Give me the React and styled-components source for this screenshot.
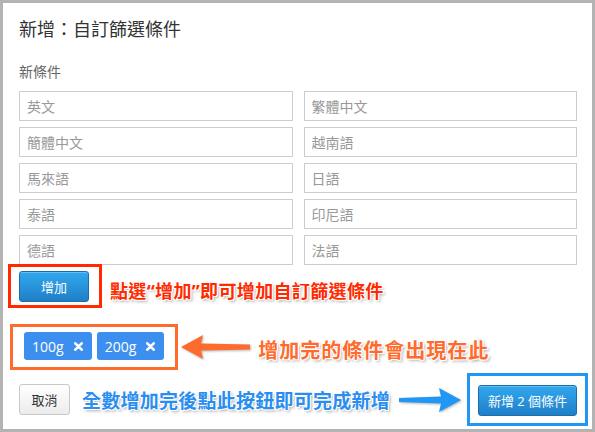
import styled, { createGlobalStyle } from "styled-components";

const GlobalStyle = createGlobalStyle`
  body {
    margin: 0;
    background: #b3b3b3;
    font-family: "Open Sans", "Noto Sans CJK TC", sans-serif;
  }
`

const Panel = styled.div`
  box-sizing: border-box;
  margin: 3px;
  width: 589px;
  height: 426px;
  background: #fff;
  padding: 14px 15px 0 16px;
  display: flex;
  flex-direction: column;
`
const Title = styled.h2`
  margin: 0;
  font-size: 18px;
  line-height: 24px;
  font-weight: 400;
  color: #333;
`
const Label = styled.div`
  margin-top: 22px;
  font-size: 14px;
  line-height: 18px;
  color: #666;
`
const Fields = styled.div`
  margin-top: 10px;
  display: grid;
  grid-template-columns: 1fr 1fr;
  column-gap: 11px;
  row-gap: 6px;
`
const Field = styled.input`
  box-sizing: border-box;
  height: 30px;
  margin: 0;
  border: 1px solid #ccc;
  border-radius: 0;
  padding: 0 7px;
  font-family: inherit;
  font-size: 14px;
  color: #333;
  outline: none;
  &::placeholder {
    color: #999;
  }
`
const Row = styled.div`
  display: flex;
  align-items: center;
  margin-top: ${p => p.$top}px;
`
const Callout = styled.div`
  display: flex;
  align-items: center;
  gap: 5px;
  border: 3px solid ${p => p.$color};
  padding: ${p => p.$pad};
  margin-left: ${p => p.$left || 0}px;
  margin-right: ${p => p.$right || 0}px;
`
const Note = styled.span`
  margin-left: ${p => p.$left}px;
  padding-top: ${p => p.$dy || 0}px;
  font-size: ${p => p.$size}px;
  font-weight: 700;
  letter-spacing: ${p => p.$spacing || 0}px;
  color: ${p => p.$color};
  white-space: nowrap;
  text-shadow: -1px -1px 0 #fff, 1px -1px 0 #fff, -1px 1px 0 #fff, 1px 1px 0 #fff,
    2px 2px 3px rgba(0, 0, 0, 0.35);
`
const Button = styled.button`
  box-sizing: border-box;
  height: 31px;
  width: ${p => p.$width}px;
  margin: 0;
  padding: 0;
  border-radius: 3px;
  font-family: inherit;
  font-size: 13px;
  cursor: pointer;
  color: ${p => (p.$primary ? "#fff" : "#333")};
  border: 1px solid ${p => (p.$primary ? "#1c6eab" : "#c8c8c8")};
  background: ${p =>
    p.$primary
      ? "linear-gradient(#31a8ee, #1f7fc8)"
      : "linear-gradient(#ffffff, #ececec)"};
  box-shadow: ${p => (p.$primary ? "inset 0 1px 0 rgba(255,255,255,0.25)" : "none")};
`
const Tag = styled.span`
  display: inline-flex;
  align-items: center;
  gap: 10px;
  height: 28px;
  padding: 0 9px 0 8px;
  border-radius: 3px;
  background: #3d8fef;
  color: #fff;
  font-size: 14px;
`
const ArrowSvg = styled.svg`
  display: block;
  margin-left: ${p => p.$left || 0}px;
  flex: none;
  filter: drop-shadow(1px 1px 1px rgba(0, 0, 0, 0.3));
`

function Cross() {
  return (
    <svg width="9" height="9" viewBox="0 0 9 9">
      <path d="M1.3 1.3 L7.7 7.7 M7.7 1.3 L1.3 7.7" stroke="#fff" strokeWidth="2.6" strokeLinecap="round" />
    </svg>
  )
}

function LeftArrow() {
  return (
    <ArrowSvg width="72" height="28" viewBox="0 0 72 28" $left={2}>
      <polygon points="1,14 23,2 21,10.5 70,11.5 70,16.5 21,17.5 23,26" fill="#ff6b2c" />
    </ArrowSvg>
  )
}

function RightArrow() {
  return (
    <ArrowSvg width="64" height="26" viewBox="0 0 64 26" $left={8}>
      <polygon points="63,13 41,1 43,9.5 1,11 1,15 43,16.5 41,25" fill="#2196f3" />
    </ArrowSvg>
  )
}

const languages = [
  "英文", "繁體中文",
  "簡體中文", "越南語",
  "馬來語", "日語",
  "泰語", "印尼語",
  "德語", "法語",
];

function App() {
  return (
    <>
      <GlobalStyle />
      <Panel>
        <Title>新增：自訂篩選條件</Title>
        <Label>新條件</Label>
        <Fields>
          {languages.map(name => (
            <Field key={name} placeholder={name} />
          ))}
        </Fields>

        <Row $top={-1}>
          <Callout $color="#ff2a00" $pad="4px 10px 3px 8px" $left={-11}>
            <Button $primary $width={70}>增加</Button>
          </Callout>
          <Note $left={8} $dy={8} $size={18} $spacing={0.35} $color="#ff2a00">點選“增加”即可增加自訂篩選條件</Note>
        </Row>

        <Row $top={16}>
          <Callout $color="#ff6b2c" $pad="5px 11px 7px 11px" $left={-9}>
            <Tag>100g <Cross /></Tag>
            <Tag>200g <Cross /></Tag>
          </Callout>
          <LeftArrow />
          <Note $left={6} $dy={4} $size={20} $spacing={1} $color="#ff6b2c">增加完的條件會出現在此</Note>
        </Row>

        <Row $top={3}>
          <Button $width={54}>取消</Button>
          <Note $left={12} $size={19} $spacing={0.25} $color="#2a8ef0">全數增加完後點此按鈕即可完成新增</Note>
          <RightArrow />
          <Callout $color="#2196f3" $pad="9px 8px 7px 8px" $left={5} $right={-11}>
            <Button $primary $width={99}>新增 2 個條件</Button>
          </Callout>
        </Row>
      </Panel>
    </>
  )
}
export default App;
